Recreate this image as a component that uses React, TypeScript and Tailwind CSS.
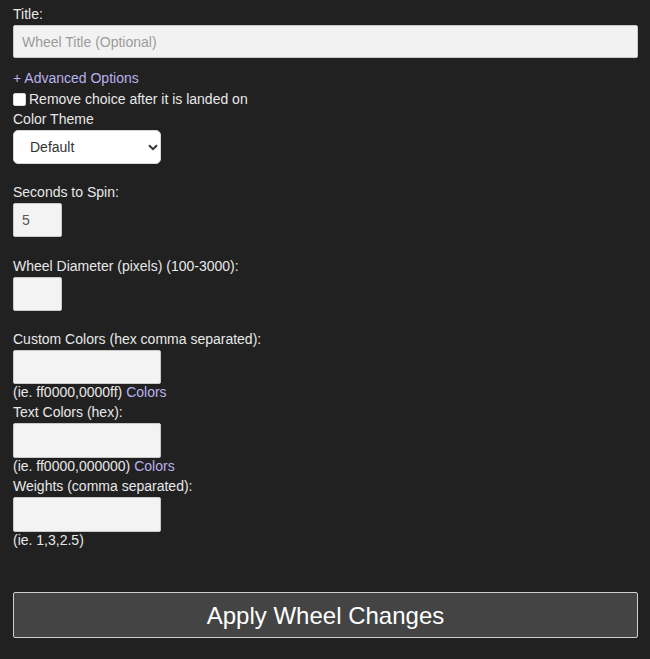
import React, { useState } from 'react';

const fieldClass =
  'h-[34px] bg-[#f3f3f3] border border-[#c9c9c9] rounded-[2px] px-2 text-[14px] text-[#555] outline-none';

const Hint: React.FC<{ text: string; link?: string }> = ({ text, link }) => (
  <div className="leading-[17px]">
    {text}
    {link && (
      <>
        {' '}
        <a href="#" className="text-[#b9b2ee]">
          {link}
        </a>
      </>
    )}
  </div>
);

const App: React.FC = () => {
  const [remove, setRemove] = useState(false);
  const [seconds, setSeconds] = useState('5');

  return (
    <div
      className="min-h-screen bg-[#212121] text-[#e8e8e8] text-[14px] leading-[21px] px-[13px] pt-[4px] pb-[21px]"
      style={{ fontFamily: '"Liberation Sans", Arial, sans-serif' }}
    >
      <label className="block">Title:</label>
      <input
        type="text"
        placeholder="Wheel Title (Optional)"
        className="block w-[625px] h-[33px] bg-[#f2f2f2] border border-[#c9c9c9] rounded-[2px] px-2 text-[14px] text-[#555] placeholder:text-[#9b9b9b] outline-none"
      />

      <a href="#" className="block mt-[10px] text-[#b9b2ee]">
        + Advanced Options
      </a>

      <label className="flex items-center h-[20px] gap-[3px]">
        <span
          onClick={() => setRemove(!remove)}
          className="inline-block w-[13px] h-[13px] bg-white rounded-[2px] border border-[#ddd]"
        />
        <input type="checkbox" checked={remove} onChange={() => setRemove(!remove)} className="hidden" />
        Remove choice after it is landed on
      </label>

      <div>Color Theme</div>
      <div className="relative w-[148px] h-[34px] bg-white rounded-[5px] border border-[#d6d6d6]">
        <span className="absolute left-[16px] top-[6px] text-[#333]">Default</span>
        <svg
          className="absolute left-[134px] top-[13px]"
          width="10"
          height="7"
          viewBox="0 0 10 7"
          fill="none"
        >
          <path d="M1 1.2 L5 5.2 L9 1.2" stroke="#333" strokeWidth="2" />
        </svg>
      </div>

      <div className="mt-[18px]">Seconds to Spin:</div>
      <input
        type="text"
        value={seconds}
        onChange={(e) => setSeconds(e.target.value)}
        className={`${fieldClass} block w-[49px]`}
      />

      <div className="mt-[19px]">Wheel Diameter (pixels) (100-3000):</div>
      <input type="text" className={`${fieldClass} block w-[49px]`} />

      <div className="mt-[18px]">Custom Colors (hex comma separated):</div>
      <input type="text" className={`${fieldClass} block w-[148px] h-[33px]`} />
      <Hint text="(ie. ff0000,0000ff)" link="Colors" />

      <div className="mt-[1px]">Text Colors (hex):</div>
      <input type="text" className={`${fieldClass} block w-[148px] h-[35px]`} />
      <Hint text="(ie. ff0000,000000)" link="Colors" />

      <div className="mt-[1px]">Weights (comma separated):</div>
      <input type="text" className={`${fieldClass} block w-[148px] h-[35px]`} />
      <Hint text="(ie. 1,3,2.5)" />

      <button className="block mt-[43px] w-[625px] h-[46px] bg-[#444444] border border-[#cfcfcf] rounded-[2px] text-white text-[24px]">
        Apply Wheel Changes
      </button>
    </div>
  );
};

export default App;
